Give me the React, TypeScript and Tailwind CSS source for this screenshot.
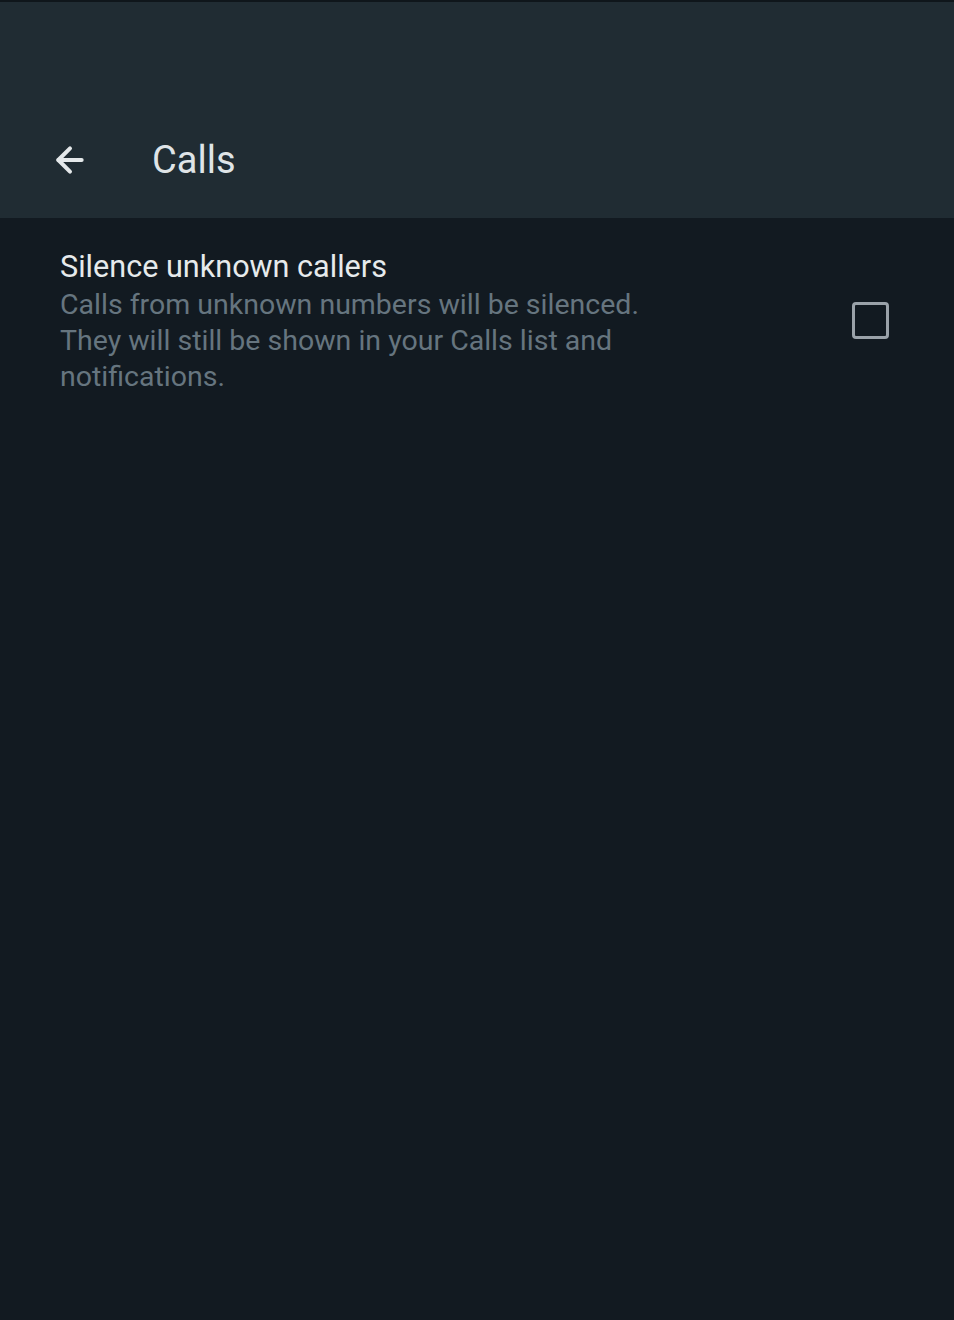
import { ArrowLeft } from 'lucide-react';

export default function App() {
    return (
        <main className="min-h-[1320px] w-full bg-[#121a21] font-['Roboto',sans-serif] flex flex-col">
            <div className="h-[2px] bg-[#0f161b]" />
            <header className="h-[216px] bg-[#202c33] flex items-end pb-[36px]">
                <div className="flex items-center pl-[50px]">
                    <ArrowLeft size={40} strokeWidth={2.4} className="text-[#e4e8ea]" />
                    <h1 className="ml-[62px] text-[38px] leading-[44px] text-[#dfe4e7]">Calls</h1>
                </div>
            </header>

            <section className="flex items-center justify-between pl-[60px] pr-[65px] pt-[31px]">
                <div className="flex flex-col max-w-[610px]">
                    <span className="text-[30.6px] leading-[36px] text-[#e6eaec]">Silence unknown callers</span>
                    <p className="mt-[2px] text-[28.5px] leading-[36px] text-[#66757f]">
                        Calls from unknown numbers will be silenced. They will still be shown in your Calls list and notifications.
                    </p>
                </div>
                <div className="mb-[4px] w-[37px] h-[37px] rounded-[4px] border-[3px] border-[#9aa2a9]" />
            </section>
        </main>
    );
}
